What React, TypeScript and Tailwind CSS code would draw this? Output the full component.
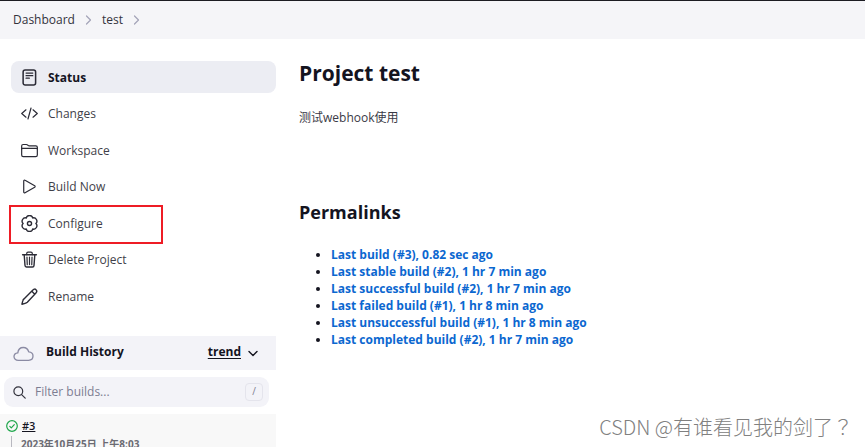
import { ReactNode } from "react";

const NAV_ITEMS = [
  { label: "Status", icon: <StatusIcon />, active: true },
  { label: "Changes", icon: <ChangesIcon /> },
  { label: "Workspace", icon: <FolderIcon /> },
  { label: "Build Now", icon: <PlayIcon /> },
  { label: "Configure", icon: <GearIcon />, highlighted: true },
  { label: "Delete Project", icon: <TrashIcon /> },
  { label: "Rename", icon: <PencilIcon /> },
];

const PERMALINKS = [
  "Last build (#3), 0.82 sec ago",
  "Last stable build (#2), 1 hr 7 min ago",
  "Last successful build (#2), 1 hr 7 min ago",
  "Last failed build (#1), 1 hr 8 min ago",
  "Last unsuccessful build (#1), 1 hr 8 min ago",
  "Last completed build (#2), 1 hr 7 min ago",
];

export default function App() {
  return (
    <div className="relative flex h-screen flex-col overflow-hidden bg-white font-['Open_Sans','Noto_Sans_CJK_SC',sans-serif] text-xs text-[#14141f]">
      <Breadcrumbs />
      <div className="flex flex-1">
        <aside className="w-[276px] shrink-0 pt-[22px]">
          <SideNav />
          <BuildHistory />
        </aside>
        <main className="min-w-0 flex-1 pl-[23px] pt-5">
          <h1 className="text-[21px] font-bold leading-7">Project test</h1>
          <p className="mt-[23px] leading-4 text-[#3a3a46]">测试webhook使用</p>
          <h2 className="mt-[72px] text-lg font-bold leading-7">Permalinks</h2>
          <ul className="mt-5 list-disc pl-8 leading-[17px]">
            {PERMALINKS.map((text) => (
              <li key={text}>
                <a href="#" className="font-bold text-[#0b67d0]">{text}</a>
              </li>
            ))}
          </ul>
        </main>
      </div>
      <p className="absolute bottom-1.5 right-3 font-['Noto_Sans_CJK_SC',sans-serif] text-xl font-light leading-7 text-[#808080]">
        CSDN @有谁看见我的剑了<span className="font-['Noto_Sans_CJK_JP',sans-serif]">？</span>
      </p>
    </div>
  );
}

function Breadcrumbs() {
  return (
    <nav aria-label="Breadcrumb" className="flex h-[39px] shrink-0 items-center border-t border-[#1c1c22] bg-[#f5f5f8] pl-[13px] text-[#33333d]">
      <a href="#">Dashboard</a>
      <Chevron />
      <a href="#">test</a>
      <Chevron />
    </nav>
  );
}

function SideNav() {
  return (
    <nav aria-label="Project" className="flex h-[251px] flex-col justify-between pl-[11px]">
      {NAV_ITEMS.map((item) => (
        <a
          key={item.label}
          href="#"
          className={`relative flex h-8 items-center gap-[10px] rounded-lg pl-[10px] ${
            item.active ? "bg-[#ecedf3] font-bold" : "text-[#3f3f4a]"
          }`}
        >
          {item.icon}
          <span className="pt-px">{item.label}</span>
          {item.highlighted && (
            <span className="absolute -left-0.5 -top-0.5 h-[39px] w-[154px] border-2 border-[#ee1c25]" />
          )}
        </a>
      ))}
    </nav>
  );
}

function BuildHistory() {
  return (
    <section className="mt-6">
      <div className="flex h-[34px] items-center bg-[#f3f3f8] pb-0.5 pl-[13px] pr-[17px]">
        <CloudIcon />
        <h2 className="ml-3 flex-1 font-bold">Build History</h2>
        <a href="#" className="font-bold underline underline-offset-2">trend</a>
        <button aria-label="Collapse" className="ml-1.5 pt-0.5">
          <svg className="size-3" viewBox="0 0 12 12" fill="none" stroke="currentColor" strokeWidth="1.4" strokeLinecap="round" strokeLinejoin="round">
            <path d="M2 4.5l4 4 4-4" />
          </svg>
        </button>
      </div>

      <label className="ml-1 mr-[7px] mt-[7px] flex h-[30px] items-center rounded-[9px] bg-[#f3f3f8] pl-[9px] pr-1.5">
        <svg className="size-[13px] text-[#33333d]" viewBox="0 0 13 13" fill="none" stroke="currentColor" strokeWidth="1.2" strokeLinecap="round">
          <circle cx="5.3" cy="5.3" r="4.4" />
          <path d="M8.6 8.6l3.6 3.6" />
        </svg>
        <input
          type="text"
          aria-label="Filter builds"
          placeholder="Filter builds..."
          className="ml-[9px] min-w-0 flex-1 bg-transparent outline-none placeholder:text-[#7d7d92]"
        />
        <kbd className="flex h-[18px] w-[18px] items-center justify-center rounded border border-[#e4e4ec] font-[inherit] text-[10px] text-[#7d7d92]">/</kbd>
      </label>

      <div className="mt-[7px] bg-[#f8f8f8] pl-1.5 pt-1">
        <div className="flex h-4 items-center gap-1">
          <svg className="size-3" viewBox="0 0 12 12" fill="none" stroke="#1ea64b" strokeWidth="1.2" strokeLinecap="round" strokeLinejoin="round">
            <circle cx="6" cy="6" r="5.3" />
            <path d="M3.8 6.3l1.5 1.5 3-3.2" />
          </svg>
          <a href="#" className="text-[11px] font-semibold underline">#3</a>
        </div>
        <div className="ml-[5px] mt-0.5 flex h-5 border-l border-[#b8b8c0] pl-[9px] text-[10px] font-bold leading-4 text-[#6b6b73]">
          2023年10月25日 上午8:03
        </div>
      </div>
    </section>
  );
}

function Chevron() {
  return (
    <svg className="mx-[10px] h-2.5 w-[7px]" viewBox="0 0 7 10" fill="none" stroke="#a3a3b8" strokeWidth="1.2" strokeLinecap="round" strokeLinejoin="round">
      <path d="M1.5 1l4 4-4 4" />
    </svg>
  );
}

/* Icons */

function Icon({ children }: { children: ReactNode }) {
  return (
    <svg className="size-[17px] shrink-0 text-[#2b2b36]" viewBox="0 0 512 512" fill="none" stroke="currentColor" strokeWidth="36" strokeLinecap="round" strokeLinejoin="round">
      {children}
    </svg>
  );
}

function StatusIcon() {
  return (
    <Icon>
      <rect x="64" y="28" width="376" height="456" rx="60" strokeWidth="46" />
      <path d="M152 124h204M152 200h204M152 276h100" />
    </Icon>
  );
}

function ChangesIcon() {
  return (
    <Icon>
      <path d="M150 368L22 256l128-112M362 368l128-112-128-112M302 90l-92 332" />
    </Icon>
  );
}

function FolderIcon() {
  return (
    <Icon>
      <path d="M20 210V120q0-44 44-44h92q18 0 32 10l30 20q12 8 28 8h202q44 0 44 44v52" />
      <path d="M20 192h472v200q0 48-48 48H68q-48 0-48-48z" />
    </Icon>
  );
}

function PlayIcon() {
  return (
    <Icon>
      <path d="M82 92v328c0 22 22 34 40 23l290-164c18-11 18-35 0-46L122 69c-18-11-40 1-40 23z" />
    </Icon>
  );
}

function GearIcon() {
  return (
    <Icon>
      <circle cx="256" cy="256" r="62" strokeWidth="42" />
      <path
        d="M449 256A100 100 0 0 1 353 423A100 100 0 0 1 159 423A100 100 0 0 1 63 256A100 100 0 0 1 159 89A100 100 0 0 1 353 89A100 100 0 0 1 449 256Z"
        strokeWidth="42"
      />
    </Icon>
  );
}

function TrashIcon() {
  return (
    <Icon>
      <path d="M96 112l24 320c1 28 20 48 44 48h184c26 0 42-20 44-48l24-320" strokeWidth="42" />
      <path d="M48 112h416" strokeWidth="44" />
      <path d="M172 112V72c0-24 16-40 40-40h88c24 0 40 16 40 40v40M256 180v230M180 180l8 230M332 180l-8 230" />
    </Icon>
  );
}

function PencilIcon() {
  return (
    <Icon>
      <path
        d="M358 62Q410 8 452 52Q500 98 450 152L190 430Q160 456 124 464L28 488L54 388Q62 350 90 328ZM326 96l88 90"
        strokeWidth="42"
      />
    </Icon>
  );
}

function CloudIcon() {
  return (
    <svg className="mt-1 h-4 w-[21px] shrink-0" viewBox="0 0 21 16" fill="none" stroke="#8a8aa3" strokeWidth="1.3" strokeLinejoin="round">
      <path d="M5.3 14.3C2.7 14.3 1 12.8 1 10.6c0-2 1.5-3.4 3.8-3.7C5.2 3.5 7.5 1.5 10.3 1.5c2.7 0 4.7 1.6 5.4 4.4 2.6.2 4.3 1.8 4.3 4.2 0 2.6-1.8 4.2-4.4 4.2z" />
    </svg>
  );
}
